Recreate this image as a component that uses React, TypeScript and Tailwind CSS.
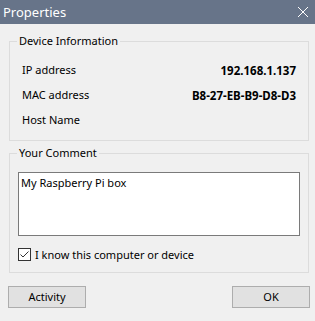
import React from "react";

const ROWS = [
  { label: "IP address", value: "192.168.1.137" },
  { label: "MAC address", value: "B8-27-EB-B9-D8-D3" },
  { label: "Host Name", value: "" },
];

function CloseIcon() {
  return (
    <svg width="12" height="12" viewBox="0 0 12 12" aria-hidden>
      <path d="M1 1L11 11M11 1L1 11" stroke="#ffffff" strokeWidth="1" fill="none" />
    </svg>
  );
}

function CheckBox() {
  return (
    <span className="w-[13px] h-[13px] border border-[#333333] bg-white flex items-center justify-center shrink-0">
      <svg width="11" height="11" viewBox="0 0 11 11" aria-hidden>
        <path d="M1.5 5.5L4 8L9.5 2.5" stroke="#333333" strokeWidth="1" fill="none" />
      </svg>
    </span>
  );
}

export default function App() {
  return (
    <div
      className="w-[315px] h-[321px] bg-[#f0f0f0] flex flex-col text-[11px] text-black overflow-hidden"
      style={{ fontFamily: '"Noto Sans", "Segoe UI", sans-serif' }}
    >
      <div className="h-[24px] bg-[#677489] flex items-center justify-between pl-[3px] pr-[6px] shrink-0">
        <span className="text-white text-[13px] leading-4">Properties</span>
        <CloseIcon />
      </div>

      <fieldset className="ml-[9px] mr-[6px] mt-[9px] border border-[#dcdcdc] px-0 pb-[7px]">
        <legend className="ml-[7px] px-[2px] leading-4">Device Information</legend>
        <div className="pt-[9px] pl-[12px] pr-[12px]">
          {ROWS.map((r) => (
            <div key={r.label} className="h-[25px] flex items-center justify-between">
              <span>{r.label}</span>
              <span className="font-bold text-[11.5px]">{r.value}</span>
            </div>
          ))}
        </div>
      </fieldset>

      <fieldset className="ml-[9px] mr-[6px] mt-[4px] border border-[#dcdcdc] px-0 pb-[11px]">
        <legend className="ml-[7px] px-[2px] leading-4">Your Comment</legend>
        <div className="mt-[11px] mx-[8px] h-[64px] border border-[#7a7a7a] bg-white p-[2px] leading-4">
          My Raspberry Pi box
        </div>
        <label className="mt-[12px] mx-[8px] flex items-center gap-[4px] h-[13px] leading-4">
          <CheckBox />
          <span>I know this computer or device</span>
        </label>
      </fieldset>

      <div className="mt-[13px] pl-[8px] pr-[5px] flex justify-between">
        <button className="w-[78px] h-[22px] bg-[#e1e1e1] border border-[#adadad] leading-4">
          Activity
        </button>
        <button className="w-[78px] h-[22px] bg-[#e1e1e1] border border-[#adadad] leading-4">
          OK
        </button>
      </div>
    </div>
  );
}
